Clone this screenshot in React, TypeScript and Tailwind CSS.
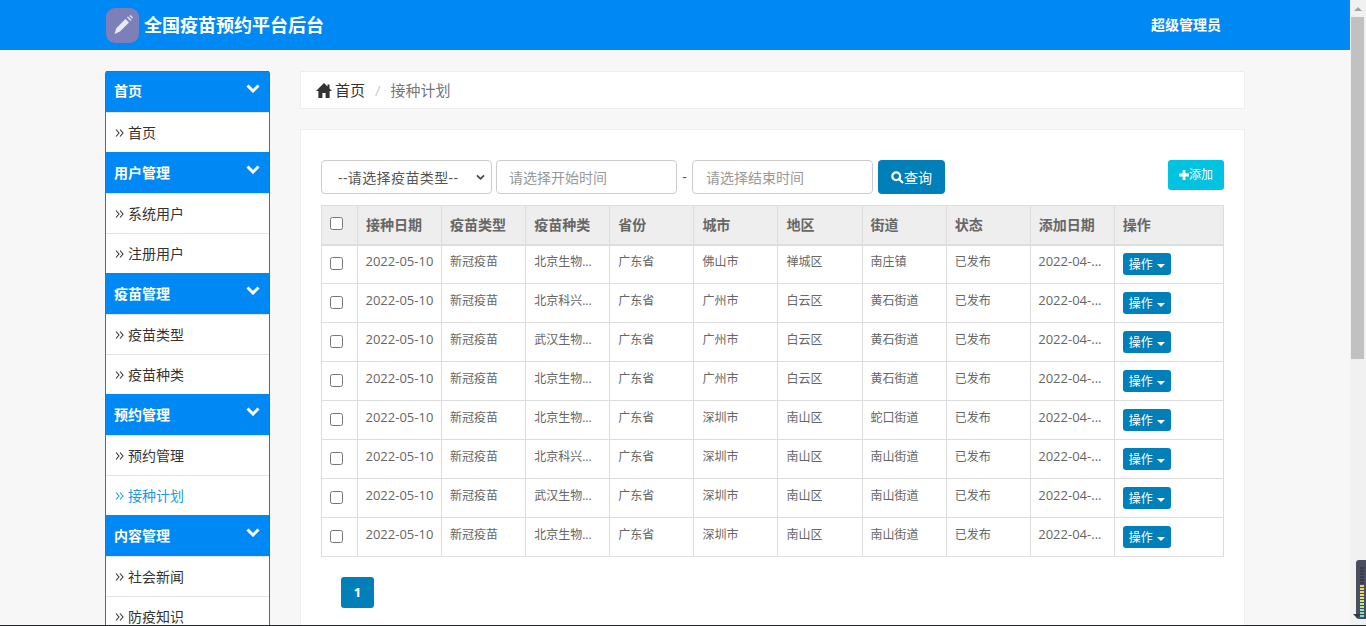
const font = { fontFamily: '"Open Sans", "Noto Sans CJK SC", sans-serif' };

const menu = [
  { title: "首页", items: ["首页"] },
  { title: "用户管理", items: ["系统用户", "注册用户"] },
  { title: "疫苗管理", items: ["疫苗类型", "疫苗种类"] },
  { title: "预约管理", items: ["预约管理", "接种计划"] },
  { title: "内容管理", items: ["社会新闻", "防疫知识"] },
];

const heads = ["接种日期", "疫苗类型", "疫苗种类", "省份", "城市", "地区", "街道", "状态", "添加日期", "操作"];

const rows = [
  ["北京生物...", "佛山市", "禅城区", "南庄镇"],
  ["北京科兴...", "广州市", "白云区", "黄石街道"],
  ["武汉生物...", "广州市", "白云区", "黄石街道"],
  ["北京生物...", "广州市", "白云区", "黄石街道"],
  ["北京生物...", "深圳市", "南山区", "蛇口街道"],
  ["北京科兴...", "深圳市", "南山区", "南山街道"],
  ["武汉生物...", "深圳市", "南山区", "南山街道"],
  ["北京生物...", "深圳市", "南山区", "南山街道"],
];

const meterBars = ["#3a3d4c", "#3a3d4c", "#3a3d4c", "#3a3d4c", "#3a3d4c", "#3a3d4c", "#e8d468", "#e8d468", "#e8d468", "#e4dc74", "#dce07c", "#cfe488", "#bfe694", "#a8e8a4", "#8ce8b8", "#70e8c8", "#60e4d8"];

function Chevron() {
  return (
    <svg viewBox="0 0 14 9" className="h-[9px] w-[14px]" fill="none" stroke="white" strokeWidth="3">
      <path d="M1.500 1.500 7 7 12.500 1.500" />
    </svg>
  );
}

function Sidebar() {
  return (
    <aside className="h-[620px] w-[165px] shrink-0 rounded-t-[3px] border-x border-[#0a7fd8] bg-white">
      {menu.map((m, i) => (
        <div key={m.title}>
          <div className={`flex h-[41px] items-start justify-between bg-[#0088f5] pl-[8px] pr-[9px] text-[14px] font-bold text-white ${i === 0 ? "border-t border-[#0a7fd8]" : ""}`}>
            <span className={`leading-[20px] ${i === 0 ? "mt-[9px]" : "mt-[11px]"}`}>{m.title}</span>
            <span className={i === 0 ? "mt-[12px]" : "mt-[13px]"}>
              <Chevron />
            </span>
          </div>
          {m.items.map((item) => (
            <div
              key={item}
              className={`flex h-[40px] items-center border-t border-[#e4e4e4] pb-[1px] pl-[9px] text-[14px] ${item === "接种计划" ? "text-[#1a9be8]" : "text-[#333333]"}`}
            >
              <svg viewBox="0 0 9 8" className="mr-[4px] mt-[1px] h-[8px] w-[9px]" fill="none" stroke="currentColor" strokeWidth="1.100">
                <path d="M1 .5 4 4 1 7.500M5 .5 8 4 5 7.500" />
              </svg>
              {item}
            </div>
          ))}
        </div>
      ))}
    </aside>
  );
}

function Breadcrumb() {
  return (
    <div className="flex h-[38px] items-center border border-[#eeeeee] bg-white pl-[15px] text-[15px]">
      <svg viewBox="0 0 16 15" className="mr-[3px] h-[15px] w-[16px]" fill="#333333">
        <path d="M8 0 0 8h2.400v7h4v-5h3.200v5h4V8H16L13.500 5.500V1.500h-2v2Z" />
      </svg>
      <span className="text-[#333333]">首页</span>
      <span className="mx-[10px] text-[#cccccc]">/</span>
      <span className="text-[#777777]">接种计划</span>
    </div>
  );
}

function Filters() {
  return (
    <div className="flex h-[34px] items-start text-[14px]">
      <div className="relative flex h-[34px] w-[171px] items-center justify-between rounded-[4px] border border-[#cccccc] bg-white pl-[16px] pr-[6px] tracking-[0.4px] text-[#555555]">
        <span>--请选择疫苗类型--</span>
        <svg viewBox="0 0 10 8" className="h-[7px] w-[9px]" fill="none" stroke="#444" strokeWidth="2">
          <path d="M1 1.500 5 5.500 9 1.500" />
        </svg>
      </div>
      <div className="ml-[4px] flex h-[34px] w-[181px] items-center rounded-[4px] border border-[#cccccc] bg-white pl-[12px] text-[#999999]">请选择开始时间</div>
      <span className="w-[15px] pt-[6px] text-center text-[#555555]">-</span>
      <div className="flex h-[34px] w-[181px] items-center rounded-[4px] border border-[#cccccc] bg-white pl-[13px] text-[#999999]">请选择结束时间</div>
      <button className="ml-[5px] flex h-[34px] w-[67px] items-center justify-center rounded-[4px] bg-[#007fb8] text-white">
        <svg viewBox="0 0 14 14" className="h-[13px] w-[13px]" fill="none" stroke="white" strokeWidth="2.400">
          <circle cx="5.600" cy="5.600" r="4.200" />
          <path d="m8.800 8.800 4.200 4.200" />
        </svg>
        查询
      </button>
      <button className="ml-auto flex h-[30px] w-[56px] items-center justify-center rounded-[3px] bg-[#00c3e2] text-[12px] text-white">
        <svg viewBox="0 0 10 10" className="h-[10px] w-[10px]" fill="white">
          <path d="M3.600 0h2.800v3.600H10v2.800H6.400V10H3.600V6.400H0V3.600h3.600z" />
        </svg>
        添加
      </button>
    </div>
  );
}

function Checkbox() {
  return <span className="block h-[13px] w-[13px] rounded-[2.500px] border border-[#767676] bg-white" />;
}

function PlanTable() {
  return (
    <table className="mt-[11px] w-[903px] table-fixed border-collapse text-[12px] text-[#666666]">
      <colgroup>
        <col className="w-[36px]" />
        {heads.slice(0, 9).map((h) => (
          <col key={h} className="w-[84.100px]" />
        ))}
        <col />
      </colgroup>
      <thead>
        <tr className="h-[39px] bg-[#eeeeee]">
          <th className="border border-b-2 border-[#dddddd] pb-[2px] pl-[8px] align-middle">
            <Checkbox />
          </th>
          {heads.map((h) => (
            <th key={h} className="border border-b-2 border-[#dddddd] pl-[8px] text-left align-middle text-[14px] font-bold">
              {h}
            </th>
          ))}
        </tr>
      </thead>
      <tbody>
        {rows.map((r, i) => (
          <tr key={i} className="h-[39px]">
            <td className="border border-[#dddddd] pb-[2px] pl-[8px] align-middle">
              <Checkbox />
            </td>
            {["2022-05-10", "新冠疫苗", r[0], "广东省", r[1], r[2], r[3], "已发布", "2022-04-..."].map((v, j) => (
              <td key={j} className={`h-[39px] border border-[#dddddd] pb-[5px] align-middle ${v.startsWith("2022") ? "pl-[7.500px] text-[13px]" : "pl-[8px]"}`}>
                {v}
              </td>
            ))}
            <td className="border border-[#dddddd] pl-[8px] align-middle">
              <button className="flex h-[22px] w-[48px] items-center justify-center rounded-[3px] bg-[#007fb8] pt-[1px] text-[12px] text-white">
                操作
                <span className="ml-[4px] mt-[2px] border-x-4 border-t-4 border-x-transparent border-t-white" />
              </button>
            </td>
          </tr>
        ))}
      </tbody>
    </table>
  );
}

export default function App() {
  return (
    <div className="relative flex h-[626px] w-[1366px] overflow-hidden bg-[#f7f7f7]" style={font}>
      <div className="min-w-0 flex-1">
        <header className="flex h-[50px] items-center bg-[#0088f5] pl-[106px] pr-[129px] text-white">
          <div className="flex h-[35px] w-[33px] items-center justify-center rounded-[9px] bg-[#7d80b8]">
            <svg viewBox="0 0 24 24" className="h-[24px] w-[24px]" fill="#e9e9f2">
              <path d="M14.500 6 18 9.500 9 18.500 3.500 21l1.800-5.800z" />
              <path d="m16 4.500 1-1 3.500 3.500-1 1z" />
              <path d="m18.500 3 1-1 2.500 2.500-1 1z" />
            </svg>
          </div>
          <span className="ml-[5px] text-[18px] font-bold">全国疫苗预约平台后台</span>
          <span className="mb-[2px] ml-auto text-[14px] font-bold">超级管理员</span>
        </header>
        <div className="flex pl-[105px] pt-[21px]">
          <Sidebar />
          <main className="ml-[30px] w-[945px] shrink-0">
            <Breadcrumb />
            <section className="mt-[20px] h-[520px] border border-[#eeeeee] bg-white pl-[20px] pr-[20px] pt-[30px]">
              <Filters />
              <PlanTable />
              <button className="ml-[20px] mt-[20px] flex h-[31px] w-[33px] items-center justify-center rounded-[3px] bg-[#007fb8] text-[13px] font-bold text-white">1</button>
            </section>
          </main>
        </div>
      </div>
      <div className="relative w-[16px] shrink-0 bg-[#f1f1f1] pl-[1px] pt-[17px]">
        <span className="absolute left-[4px] top-[7px] border-x-[4px] border-b-[4px] border-x-transparent border-b-[#a3a3a3]" />
        <div className="h-[342px] w-[13px] bg-[#c1c1c1]" />
      </div>
      <div className="absolute bottom-[7px] right-0 flex h-[59px] w-[10px] flex-col gap-[1px] rounded-l-[3px] bg-[#4a4d5e] pl-[4px] pt-[7px]">
        {meterBars.map((c, i) => (
          <span key={i} className="block h-[2px] w-[4px]" style={{ background: c }} />
        ))}
      </div>
      <span className="absolute bottom-[8px] right-[5px] border-x-[4px] border-t-[4px] border-x-transparent border-t-[#333644]" />
      <div className="absolute inset-x-0 bottom-0 h-px bg-[#23262f]" />
    </div>
  );
}
